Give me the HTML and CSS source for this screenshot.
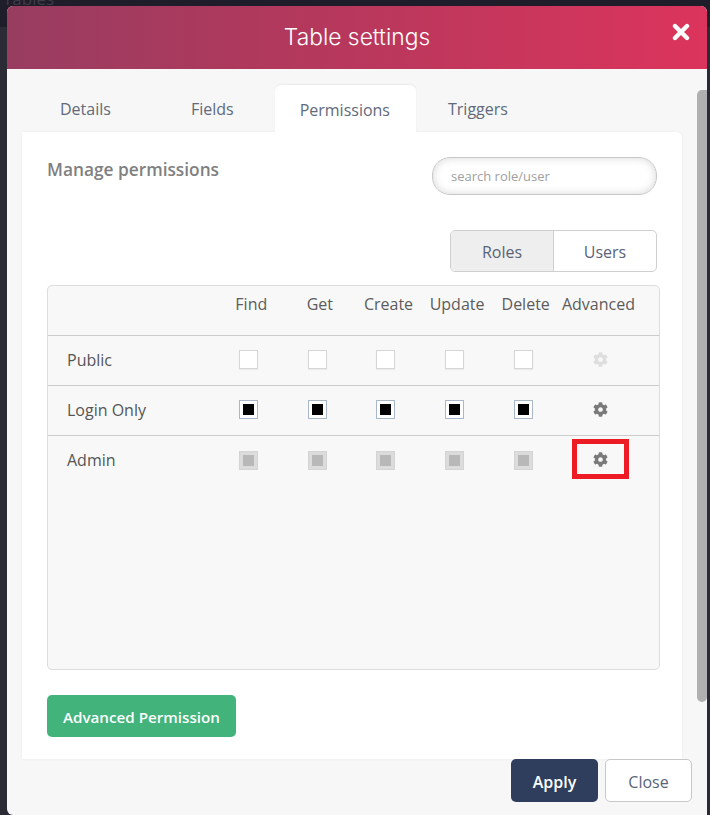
FILE: index.html
```html
<!DOCTYPE html>
<html lang="en">

<head>
    <meta charset="UTF-8">
    <meta name="viewport" content="width=device-width, initial-scale=1.0">
    <title>Table settings</title>
    <link rel="stylesheet" href="styles.css">
</head>

<body>
    <svg class="icon-defs" aria-hidden="true">
        <symbol id="gear" viewBox="0 0 512 512">
            <path d="M487.4 315.7l-42.6-24.6c4.3-23.2 4.3-47 0-70.2l42.6-24.6c4.9-2.8 7.1-8.6 5.5-14-11.1-35.6-30-67.8-54.7-94.6-3.8-4.1-10-5.1-14.8-2.3L380.8 110c-17.9-15.4-38.5-27.3-60.8-35.1V25.8c0-5.6-3.9-10.5-9.4-11.7-36.7-8.2-74.3-7.8-109.2 0-5.5 1.2-9.4 6.1-9.4 11.7V75c-22.2 7.9-42.8 19.8-60.8 35.1L88.7 85.5c-4.9-2.8-11-1.9-14.8 2.3-24.7 26.7-43.6 58.9-54.7 94.6-1.7 5.4.6 11.2 5.5 14L67.3 221c-4.3 23.2-4.3 47 0 70.2l-42.6 24.6c-4.9 2.8-7.1 8.6-5.5 14 11.1 35.6 30 67.8 54.7 94.6 3.8 4.1 10 5.1 14.8 2.3l42.6-24.6c17.9 15.4 38.5 27.3 60.8 35.1v49.2c0 5.6 3.9 10.5 9.4 11.7 36.7 8.2 74.3 7.8 109.2 0 5.5-1.2 9.4-6.1 9.4-11.7v-49.2c22.2-7.9 42.8-19.8 60.8-35.1l42.6 24.6c4.9 2.8 11 1.9 14.8-2.3 24.7-26.7 43.6-58.9 54.7-94.6 1.5-5.5-.7-11.3-5.6-14.1zM256 336c-44.1 0-80-35.9-80-80s35.9-80 80-80 80 35.9 80 80-35.9 80-80 80z"/>
        </symbol>
    </svg>

    <div class="backdrop-title">Tables</div>

    <div class="modal">
        <div class="modal-header">
            <h1 class="modal-title">Table settings</h1>
            <svg class="modal-close" viewBox="0 0 18 18" aria-label="Close">
                <path d="M3 3L15 15M15 3L3 15"/>
            </svg>
        </div>

        <div class="modal-body">
            <div class="tabs">
                <a class="tab tab-details">Details</a>
                <a class="tab tab-fields">Fields</a>
                <a class="tab tab-active">Permissions</a>
                <a class="tab tab-triggers">Triggers</a>
            </div>

            <div class="card">
                <div class="card-top">
                    <h2 class="card-title">Manage permissions</h2>
                    <input class="search-input" type="text" placeholder="search role/user">
                </div>

                <div class="toggle-row">
                    <div class="toggle">
                        <span class="toggle-item toggle-on">Roles</span>
                        <span class="toggle-item">Users</span>
                    </div>
                </div>

                <div class="perm-table">
                    <div class="perm-row perm-head">
                        <span></span>
                        <span class="perm-col">Find</span>
                        <span class="perm-col">Get</span>
                        <span class="perm-col">Create</span>
                        <span class="perm-col">Update</span>
                        <span class="perm-col">Delete</span>
                        <span class="perm-col">Advanced</span>
                    </div>

                    <div class="perm-row">
                        <span class="role-name">Public</span>
                        <span class="perm-cell"><i class="check"></i></span>
                        <span class="perm-cell"><i class="check"></i></span>
                        <span class="perm-cell"><i class="check"></i></span>
                        <span class="perm-cell"><i class="check"></i></span>
                        <span class="perm-cell"><i class="check"></i></span>
                        <span class="gear-cell"><svg class="gear gear-off"><use href="#gear"/></svg></span>
                    </div>

                    <div class="perm-row">
                        <span class="role-name">Login Only</span>
                        <span class="perm-cell"><i class="check check-on"></i></span>
                        <span class="perm-cell"><i class="check check-on"></i></span>
                        <span class="perm-cell"><i class="check check-on"></i></span>
                        <span class="perm-cell"><i class="check check-on"></i></span>
                        <span class="perm-cell"><i class="check check-on"></i></span>
                        <span class="gear-cell"><svg class="gear"><use href="#gear"/></svg></span>
                    </div>

                    <div class="perm-row perm-last">
                        <span class="role-name">Admin</span>
                        <span class="perm-cell"><i class="check check-locked"></i></span>
                        <span class="perm-cell"><i class="check check-locked"></i></span>
                        <span class="perm-cell"><i class="check check-locked"></i></span>
                        <span class="perm-cell"><i class="check check-locked"></i></span>
                        <span class="perm-cell"><i class="check check-locked"></i></span>
                        <span class="gear-cell"><span class="marked"><svg class="gear"><use href="#gear"/></svg></span></span>
                    </div>
                </div>

                <button type="button" class="advanced-button">Advanced Permission</button>
            </div>
        </div>

        <div class="modal-footer">
            <button type="button" class="apply-button">Apply</button>
            <button type="button" class="close-button">Close</button>
        </div>

        <div class="scrollbar"></div>
    </div>
</body>

</html>
```

FILE: styles.css
```css
html, body {
    height: 100%;
}

body {
    font-family: "Open Sans", "Noto Sans", Arial, sans-serif;
    background: linear-gradient(#201d2b 0, #201d2b 27px, #2b2b36 27px);
    margin: 0;
    padding: 6px 3px 0 7px;
    box-sizing: border-box;
    height: 815px;
    overflow: hidden;
    position: relative;
}

.icon-defs {
    display: none;
}

.backdrop-title {
    position: absolute;
    left: 3px;
    top: -13px;
    font-size: 17px;
    color: #3d3b47;
}

.modal {
    position: relative;
    height: 809px;
    background-color: #f7f7f7;
    border-radius: 6px 6px 0 6px;
    overflow: hidden;
}

.modal-header {
    height: 63px;
    box-sizing: border-box;
    padding-bottom: 3px;
    background: linear-gradient(90deg, #983d60 0%, #b5385c 45%, #dc345c 100%);
    display: flex;
    justify-content: center;
    align-items: center;
}

.modal-title {
    font-family: Inter, Lato, sans-serif;
    font-size: 22.8px;
    font-weight: 300;
    color: #ffffff;
    margin: 0;
}

.modal-close {
    position: absolute;
    right: 17px;
    top: 17px;
    width: 18px;
    height: 18px;
    fill: none;
    stroke: #ffffff;
    stroke-width: 4.4;
    stroke-linecap: round;
}

.modal-body {
    height: 690px;
    box-sizing: border-box;
    padding: 16px 25px 0 15px;
}

.tabs {
    display: flex;
    height: 47px;
    padding-left: 13px;
}

.tab {
    font-size: 16px;
    color: #5f6a7a;
    padding: 13px 25px 0;
}

.tab-fields {
    margin-left: 30px;
}

.tab-active {
    margin-left: 16px;
    background-color: #ffffff;
    border-radius: 6px 6px 0 0;
    box-shadow: 0 -1px 2px rgba(0, 0, 0, 0.06);
    padding-top: 14px;
    padding-right: 26px;
}

.tab-triggers {
    margin-left: 7px;
}

.card {
    background-color: #ffffff;
    border-radius: 0 6px 0 0;
    box-shadow: 0 0 3px rgba(0, 0, 0, 0.06);
    height: 627px;
    padding: 25px 25px 0;
    box-sizing: border-box;
}

.card-top {
    display: flex;
    justify-content: space-between;
    align-items: flex-start;
}

.card-title {
    font-size: 17.3px;
    font-weight: 600;
    color: #808080;
    margin: 1px 0 0;
}

.search-input {
    width: 225px;
    height: 38px;
    box-sizing: border-box;
    border: 1px solid #c8c8c8;
    border-radius: 18px;
    padding: 0 18px;
    font-family: inherit;
    font-size: 13px;
    box-shadow: inset 0 0 8px rgba(0, 0, 0, 0.16);
}

.search-input::placeholder {
    color: #a0a0a0;
}

.toggle-row {
    display: flex;
    justify-content: flex-end;
    margin-top: 35px;
}

.toggle {
    display: flex;
    width: 207px;
    height: 42px;
    box-sizing: border-box;
    border: 1px solid #cfcfcf;
    border-radius: 5px;
    overflow: hidden;
}

.toggle-item {
    flex: 1;
    display: flex;
    justify-content: center;
    align-items: center;
    padding-top: 2px;
    font-size: 16px;
    color: #5a6478;
}

.toggle-on {
    background-color: #eeeeee;
    border-right: 1px solid #cfcfcf;
}

.perm-table {
    width: 613px;
    height: 385px;
    box-sizing: border-box;
    margin-top: 13px;
    background-color: #f8f8f8;
    border: 1px solid #dddddd;
    border-radius: 5px;
}

.perm-row {
    display: grid;
    grid-template-columns: 169px repeat(5, 68.6px) 77px;
    height: 50px;
    box-sizing: border-box;
    padding-bottom: 2px;
    border-bottom: 1px solid #cccccc;
    align-items: center;
}

.perm-last {
    border-bottom: none;
}

.perm-head {
    align-items: start;
    padding: 7px 0 0;
}

.perm-col {
    font-size: 16px;
    color: #5c5c5c;
    text-align: center;
}

.role-name {
    font-size: 16px;
    color: #555555;
    padding-left: 19px;
}

.perm-cell {
    display: flex;
    justify-content: center;
    padding-right: 5px;
}

.check {
    display: block;
    width: 19px;
    height: 19px;
    box-sizing: border-box;
    background-color: #ffffff;
    border: 1px solid #d6d6d6;
    box-shadow: 0 1px 1px rgba(0, 0, 0, 0.05);
}

.check-on {
    border-color: #a9b8c9;
    background-color: #000000;
    box-shadow: inset 0 0 0 3px #ffffff;
}

.check-locked {
    border-color: #d4d4d4;
    background-color: #b8b8b8;
    box-shadow: inset 0 0 0 3px #dcdcdc;
}

.gear-cell {
    display: flex;
    justify-content: center;
    padding-left: 4px;
}

.gear {
    display: block;
    width: 15px;
    height: 15px;
    fill: #7a7a7a;
}

.gear-off {
    fill: #dedede;
}

.marked {
    display: flex;
    justify-content: center;
    align-items: center;
    width: 57px;
    height: 40px;
    margin-bottom: 2px;
    box-sizing: border-box;
    border: 5px solid #ed1c24;
}

.advanced-button {
    display: block;
    width: 189px;
    height: 42px;
    margin-top: 25px;
    padding-top: 3px;
    background-color: #41b37b;
    color: #ffffff;
    border: none;
    border-radius: 5px;
    font-family: inherit;
    font-size: 15.2px;
    font-weight: 600;
}

.modal-footer {
    display: flex;
    justify-content: flex-end;
    gap: 7px;
    padding-right: 15px;
}

.apply-button,
.close-button {
    width: 87px;
    height: 43px;
    box-sizing: border-box;
    padding-top: 3px;
    border-radius: 5px;
    font-family: inherit;
    font-size: 16px;
}

.apply-button {
    background-color: #2e3e5c;
    color: #ffffff;
    border: none;
    font-weight: 600;
}

.close-button {
    background-color: #ffffff;
    color: #5a6478;
    border: 1px solid #c8c8c8;
}

.scrollbar {
    position: absolute;
    right: 0;
    top: 84px;
    width: 10px;
    height: 612px;
    background-color: #b0b0b0;
    border-radius: 5px 0 5px 5px;
}
```
